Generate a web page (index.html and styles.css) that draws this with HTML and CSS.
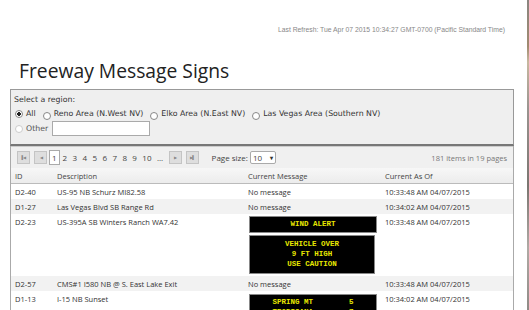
FILE: index.html
```html
<!DOCTYPE html>
<html>
<head>
	<title>Freeway Message Signs</title>
	<link rel="stylesheet" href="styles.css">
</head>
<body>
	<div class="page">
		<div class="refresh">Last Refresh: Tue Apr 07 2015 10:34:27 GMT-0700 (Pacific Standard Time)</div>
		<h1 class="title">Freeway Message Signs</h1>

		<!-- region picker -->
		<div class="region">
			<div class="region-label">Select a region:</div>
			<div class="region-row">
				<label><input type="radio" name="region" checked> All</label>
				<label><input type="radio" name="region"> Reno Area (N.West NV)</label>
				<label><input type="radio" name="region"> Elko Area (N.East NV)</label>
				<label><input type="radio" name="region"> Las Vegas Area (Southern NV)</label>
			</div>
			<div class="region-row">
				<label class="off"><input type="radio" name="region" disabled> Other</label>
				<input type="text" class="other-txt">
			</div>
		</div>

		<div class="grid">
			<div class="pager">
				<span class="pbtn">&#9612;&#9664;</span>
				<span class="pbtn">&#9664;</span>
				<span class="pnum cur">1</span>
				<span class="pnum">2</span>
				<span class="pnum">3</span>
				<span class="pnum">4</span>
				<span class="pnum">5</span>
				<span class="pnum">6</span>
				<span class="pnum">7</span>
				<span class="pnum">8</span>
				<span class="pnum">9</span>
				<span class="pnum">10</span>
				<span class="pnum">...</span>
				<span class="pbtn">&#9654;</span>
				<span class="pbtn">&#9654;&#9612;</span>
				<span class="psize">Page size:</span>
				<span class="psel">10 <b>&#9662;</b></span>
				<span class="pinfo">181 items in 19 pages</span>
			</div>
			<table class="rows">
				<thead>
					<tr>
						<th class="c-id">ID</th>
						<th class="c-desc">Description</th>
						<th class="c-msg">Current Message</th>
						<th>Current As Of</th>
					</tr>
				</thead>
				<tbody>
					<tr>
						<td>D2-40</td>
						<td>US-95 NB Schurz MI82.58</td>
						<td>No message</td>
						<td>10:33:48 AM 04/07/2015</td>
					</tr>
					<tr class="alt">
						<td>D1-27</td>
						<td>Las Vegas Blvd SB Range Rd</td>
						<td>No message</td>
						<td>10:34:02 AM 04/07/2015</td>
					</tr>
					<tr>
						<td>D2-23</td>
						<td>US-395A SB Winters Ranch WA7.42</td>
						<td>
							<div class="sign one">WIND ALERT</div>
							<div class="sign three">VEHICLE OVER<br>9 FT HIGH<br>USE CAUTION</div>
						</td>
						<td>10:33:48 AM 04/07/2015</td>
					</tr>
					<tr class="alt">
						<td>D2-57</td>
						<td>CMS#1 I580 NB @ S. East Lake Exit</td>
						<td>No message</td>
						<td>10:33:48 AM 04/07/2015</td>
					</tr>
					<tr>
						<td>D1-13</td>
						<td>I-15 NB Sunset</td>
						<td>
							<div class="sign left">SPRING MT        5<br>TROPICANA        7</div>
						</td>
						<td>10:34:02 AM 04/07/2015</td>
					</tr>
				</tbody>
			</table>
		</div>
	</div>
	<div class="edge"></div>
</body>
</html>
```

FILE: styles.css
```css
html, body {
	margin: 0;
	padding: 0;
	background: #fff;
	height: 310px;
	overflow: hidden;
}

body {
	display: flex;
}

.page {
	width: 504px;
	margin-left: 10px;
	font-family: "Open Sans", sans-serif;
	color: #333;
}

.edge {
	margin-left: 13px;
	width: 2px;
	height: 310px;
	background: linear-gradient(#8a8580 0%, #a08a70 15%, #c8b8a0 20%, #9a9490 35%, #7a7570 60%, #b0aaa5 80%, #8f8a86 100%);
}

.refresh {
	font-family: "Liberation Sans", Arial, sans-serif;
	font-size: 6.8px;
	color: #888;
	text-align: right;
	padding-right: 9px;
	margin-top: 26px;
	height: 10px;
}

.title {
	font-family: "Open Sans", sans-serif;
	font-weight: normal;
	font-size: 19.3px;
	color: #222;
	margin: 21px 0 0 9px;
	height: 32px;
	line-height: 28px;
}

/* region box */
.region {
	background: #efefef;
	border: 1px solid #999;
	border-bottom: 2px solid #777;
	padding: 4px 3px 0 3px;
	height: 50px;
	font-family: "DejaVu Sans", sans-serif;
	font-size: 7.8px;
	color: #333;
}

.region-label {
	height: 12px;
	line-height: 12px;
}

.region-row {
	display: flex;
	align-items: center;
	height: 15px;
}

.region-row label {
	display: flex;
	align-items: center;
	margin-right: 6px;
}

.region-row label.off {
	color: #555;
	margin-right: 4px;
}

.region input[type="radio"] {
	appearance: none;
	width: 8px;
	height: 8px;
	border: 1px solid #888;
	border-radius: 50%;
	background: #fff;
	margin: 4px 3px 0 1px;
	box-sizing: border-box;
}

.region input[type="radio"]:checked {
	background: radial-gradient(#222 0, #222 1.6px, #fff 2.1px);
	margin-top: 1px;
}

.region input[type="radio"]:disabled {
	border-color: #ccc;
	margin-top: 1px;
}

.other-txt {
	width: 98px;
	height: 15px;
	box-sizing: border-box;
	border: 1px solid #aaa;
	background: #fff;
	margin: 0;
	padding: 0;
}

/* grid */
.grid {
	border-left: 1px solid #aaa;
	border-right: 1px solid #aaa;
	font-size: 7.5px;
}

.pager {
	display: flex;
	align-items: center;
	height: 21px;
	background: #f0f0f0;
	padding-left: 6px;
	border-top: 1px solid #ccc;
	color: #444;
}

.pbtn {
	width: 11px;
	height: 11px;
	background: #dedede;
	border: 1px solid #c4c4c4;
	color: #888;
	font-size: 4px;
	display: flex;
	align-items: center;
	justify-content: center;
	margin-right: 4px;
	letter-spacing: -1px;
}

.pnum {
	margin-right: 5.4px;
	font-size: 8px;
}

.pnum.cur {
	background: #fff;
	border: 1px solid #aaa;
	padding: 1px 2px;
	margin-left: -2px;
	margin-right: 3px;
}

.psize {
	margin-left: 9px;
	font-size: 8px;
	margin-right: 2px;
}

.psel {
	width: 26px;
	height: 13px;
	box-sizing: border-box;
	background: #fff;
	border: 1px solid #aaa;
	border-radius: 2px;
	font-size: 8px;
	padding-left: 2px;
	display: flex;
	align-items: center;
	justify-content: space-between;
}

.psel b {
	font-size: 6px;
	margin-right: 2px;
	color: #333;
}

.pinfo {
	margin-left: auto;
	margin-right: 6px;
	color: #777;
	font-size: 7.5px;
}

.rows {
	width: 100%;
	border-collapse: collapse;
}

.rows th {
	text-align: left;
	font-weight: normal;
	height: 15px;
	padding: 0 4px;
	background: linear-gradient(#f7f7f7, #ececec);
	border-bottom: 1px solid #bbb;
	color: #444;
}

.rows td {
	padding: 3px 4px 2px 4px;
	height: 10px;
	vertical-align: top;
	line-height: 10px;
	color: #333;
}

.rows tr.alt td {
	background: #f2f2f2;
}

.c-id { width: 34px; }
.c-desc { width: 183px; }
.c-msg { width: 129px; }

/* message signs */
.sign {
	width: 126px;
	background: #000;
	border: 1px solid #888;
	color: #e8e800;
	font-family: "Liberation Mono", monospace;
	font-weight: bold;
	font-size: 7.5px;
	text-align: center;
	white-space: pre;
	margin-left: 1px;
}

.sign.one {
	height: 15px;
	line-height: 15px;
	margin-top: -1px;
}

.sign.three {
	margin-top: 2px;
	line-height: 10px;
	padding-top: 3px;
	box-sizing: border-box;
	height: 39px;
}

.sign.left {
	padding-top: 2px;
	line-height: 10px;
	margin-top: 0;
}
```
